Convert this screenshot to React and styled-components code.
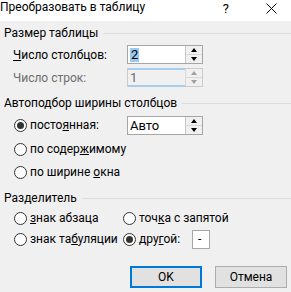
import styled, { createGlobalStyle } from "styled-components";

const Global = createGlobalStyle`
  html, body {
    margin: 0;
    padding: 0;
    background: #f0f0f0;
  }
  body {
    font-family: Roboto, "Liberation Sans", sans-serif;
    font-size: 12px;
    color: #000;
  }
`;

const Dialog = styled.div`
  width: 291px;
  height: 292px;
  background: #f0f0f0;
  overflow: hidden;
`;

const TitleBar = styled.div`
  height: 21px;
  background: #fff;
  display: flex;
  align-items: flex-start;
  justify-content: space-between;
  box-sizing: border-box;
`;

const Title = styled.div`
  font-size: 12px;
  line-height: 14px;
  white-space: nowrap;
`;

const TitleButtons = styled.div`
  display: flex;
  align-items: center;
  height: 14px;
  margin-top: 1px;
  margin-right: 14px;
  gap: 37px;
  font-size: 13px;
`;

const Body = styled.div`
  padding: 0 0 0 4px;
  display: flex;
  flex-direction: column;
`;

const Legend = styled.div`
  display: flex;
  align-items: center;
  height: 14px;
  margin-top: ${(p) => p.$top}px;
  gap: 5px;
  white-space: nowrap;

  &::after {
    content: "";
    flex: 1;
    height: 1px;
    background: #dcdcdc;
  }
`;

const FieldRow = styled.div`
  display: flex;
  align-items: center;
  height: 19px;
  margin-top: ${(p) => p.$top}px;
  padding-left: 9px;
  color: ${(p) => (p.$disabled ? "#6d6d6d" : "#000")};
`;

const FieldLabel = styled.span`
  width: 113px;
  white-space: nowrap;
`;

const Spin = styled.div`
  display: flex;
  width: 76px;
  height: 19px;
  box-sizing: border-box;
  border: 1px solid ${(p) => (p.$disabled ? "#cccccc" : "#a6a6a6")};
  background: ${(p) => (p.$disabled ? "#f0f0f0" : "#fff")};
  margin-left: ${(p) => p.$left || 0}px;
`;

const SpinInput = styled.div`
  flex: 1;
  display: flex;
  align-items: center;
  padding-left: 2px;
  font-size: 13px;
  color: ${(p) => (p.$disabled ? "#6d6d6d" : "#000")};
  border-top: ${(p) => (p.$disabled ? "2px solid #a9cdee" : "none")};
  border-bottom: ${(p) => (p.$disabled ? "2px solid #a9cdee" : "none")};
  margin: ${(p) => (p.$disabled ? "-1px 0" : "0")};
`;

const Selected = styled.span`
  background: #99c9ef;
  line-height: 14px;
  padding: 0 1px;
`;

const SpinButtons = styled.div`
  width: 16px;
  display: flex;
  flex-direction: column;
  border-left: 1px solid ${(p) => (p.$disabled ? "#d9d9d9" : "#c8c8c8")};
`;

const SpinButton = styled.div`
  flex: 1;
  display: flex;
  align-items: center;
  justify-content: center;
  background: #f0f0f0;
  & + & {
    border-top: 1px solid ${(p) => (p.$disabled ? "#d9d9d9" : "#c8c8c8")};
  }
`;

const Arrow = styled.div`
  width: 0;
  height: 0;
  border-left: 3.5px solid transparent;
  border-right: 3.5px solid transparent;
  ${(p) =>
    p.$down
      ? `border-top: 4px solid ${p.$disabled ? "#a0a0a0" : "#000"};`
      : `border-bottom: 4px solid ${p.$disabled ? "#a0a0a0" : "#000"};`}
`;

const RadioRow = styled.div`
  display: flex;
  align-items: center;
  height: 18px;
  margin-top: ${(p) => p.$top}px;
  padding-left: 10px;
`;

const RadioOption = styled.div`
  display: flex;
  align-items: center;
  width: ${(p) => (p.$width ? `${p.$width}px` : "auto")};
  flex-shrink: 0;
  white-space: nowrap;
`;

const Circle = styled.span`
  width: 13px;
  height: 13px;
  flex-shrink: 0;
  box-sizing: border-box;
  border: 1px solid #333;
  border-radius: 50%;
  background: #fff;
  display: inline-flex;
  align-items: center;
  justify-content: center;
  margin-right: 3px;

  &::after {
    content: "";
    width: 7px;
    height: 7px;
    border-radius: 50%;
    background: ${(p) => (p.$checked ? "#333" : "transparent")};
  }
`;

const Label = styled.span`
  white-space: pre;
`;

const Key = styled.span`
  text-decoration: underline;
  text-underline-offset: 1px;
`;

const SmallBox = styled.div`
  width: 18px;
  height: 19px;
  flex-shrink: 0;
  box-sizing: border-box;
  border: 1px solid #a6a6a6;
  background: #fff;
  display: flex;
  align-items: center;
  padding-left: 5px;
`;

const Buttons = styled.div`
  display: flex;
  justify-content: flex-end;
  gap: 13px;
  margin-top: 18px;
  padding-right: 4px;
`;

const Button = styled.div`
  width: 72px;
  height: 22px;
  box-sizing: border-box;
  border: ${(p) => (p.$primary ? "2px solid #0078d7" : "1px solid #adadad")};
  background: #e1e1e1;
  display: flex;
  align-items: center;
  justify-content: center;
`;

const SpinBox = ({ value, disabled, selected, left }) => (
  <Spin $disabled={disabled} $left={left}>
    <SpinInput $disabled={disabled}>
      {selected ? <Selected>{value}</Selected> : value}
    </SpinInput>
    <SpinButtons $disabled={disabled}>
      <SpinButton $disabled={disabled}>
        <Arrow $disabled={disabled} />
      </SpinButton>
      <SpinButton $disabled={disabled}>
        <Arrow $down $disabled={disabled} />
      </SpinButton>
    </SpinButtons>
  </Spin>
);

const Radio = ({ checked, width, children }) => (
  <RadioOption $width={width}>
    <Circle $checked={checked} />
    <Label>{children}</Label>
  </RadioOption>
);

export default function App() {
  return (
    <Dialog>
      <Global />
      <TitleBar>
        <Title>Преобразовать в таблицу</Title>
        <TitleButtons>
          <span>?</span>
          <svg width="11" height="11" viewBox="0 0 11 11">
            <path d="M0.5 0.5 L10.5 10.5 M10.5 0.5 L0.5 10.5" stroke="#000" strokeWidth="1" />
          </svg>
        </TitleButtons>
      </TitleBar>
      <Body>
        <Legend $top={5}>Размер таблицы</Legend>
        <FieldRow $top={5}>
          <FieldLabel>
            <Key>Ч</Key>исло столбцов:
          </FieldLabel>
          <SpinBox value="2" selected left={1} />
        </FieldRow>
        <FieldRow $top={4} $disabled>
          <FieldLabel>Число строк:</FieldLabel>
          <SpinBox value="1" disabled left={1} />
        </FieldRow>

        <Legend $top={9}>Автоподбор ширины столбцов</Legend>
        <RadioRow $top={6}>
          <Radio checked width={113}>
            посто<Key>я</Key>нная:
          </Radio>
          <SpinBox value="Авто" />
        </RadioRow>
        <RadioRow $top={6}>
          <Radio>
            по содер<Key>ж</Key>имому
          </Radio>
        </RadioRow>
        <RadioRow $top={5}>
          <Radio>
            по ширине <Key>о</Key>кна
          </Radio>
        </RadioRow>

        <Legend $top={10}>Разделитель</Legend>
        <RadioRow $top={4}>
          <Radio width={109}>
            <Key>з</Key>нак абзаца
          </Radio>
          <Radio>
            точ<Key>к</Key>а с запятой
          </Radio>
        </RadioRow>
        <RadioRow $top={3}>
          <Radio width={109}>
            знак та<Key>б</Key>уляции
          </Radio>
          <Radio checked width={69}>
            дру<Key>г</Key>ой:
          </Radio>
          <SmallBox>-</SmallBox>
        </RadioRow>

        <Buttons>
          <Button $primary>OK</Button>
          <Button>Отмена</Button>
        </Buttons>
      </Body>
    </Dialog>
  );
}
